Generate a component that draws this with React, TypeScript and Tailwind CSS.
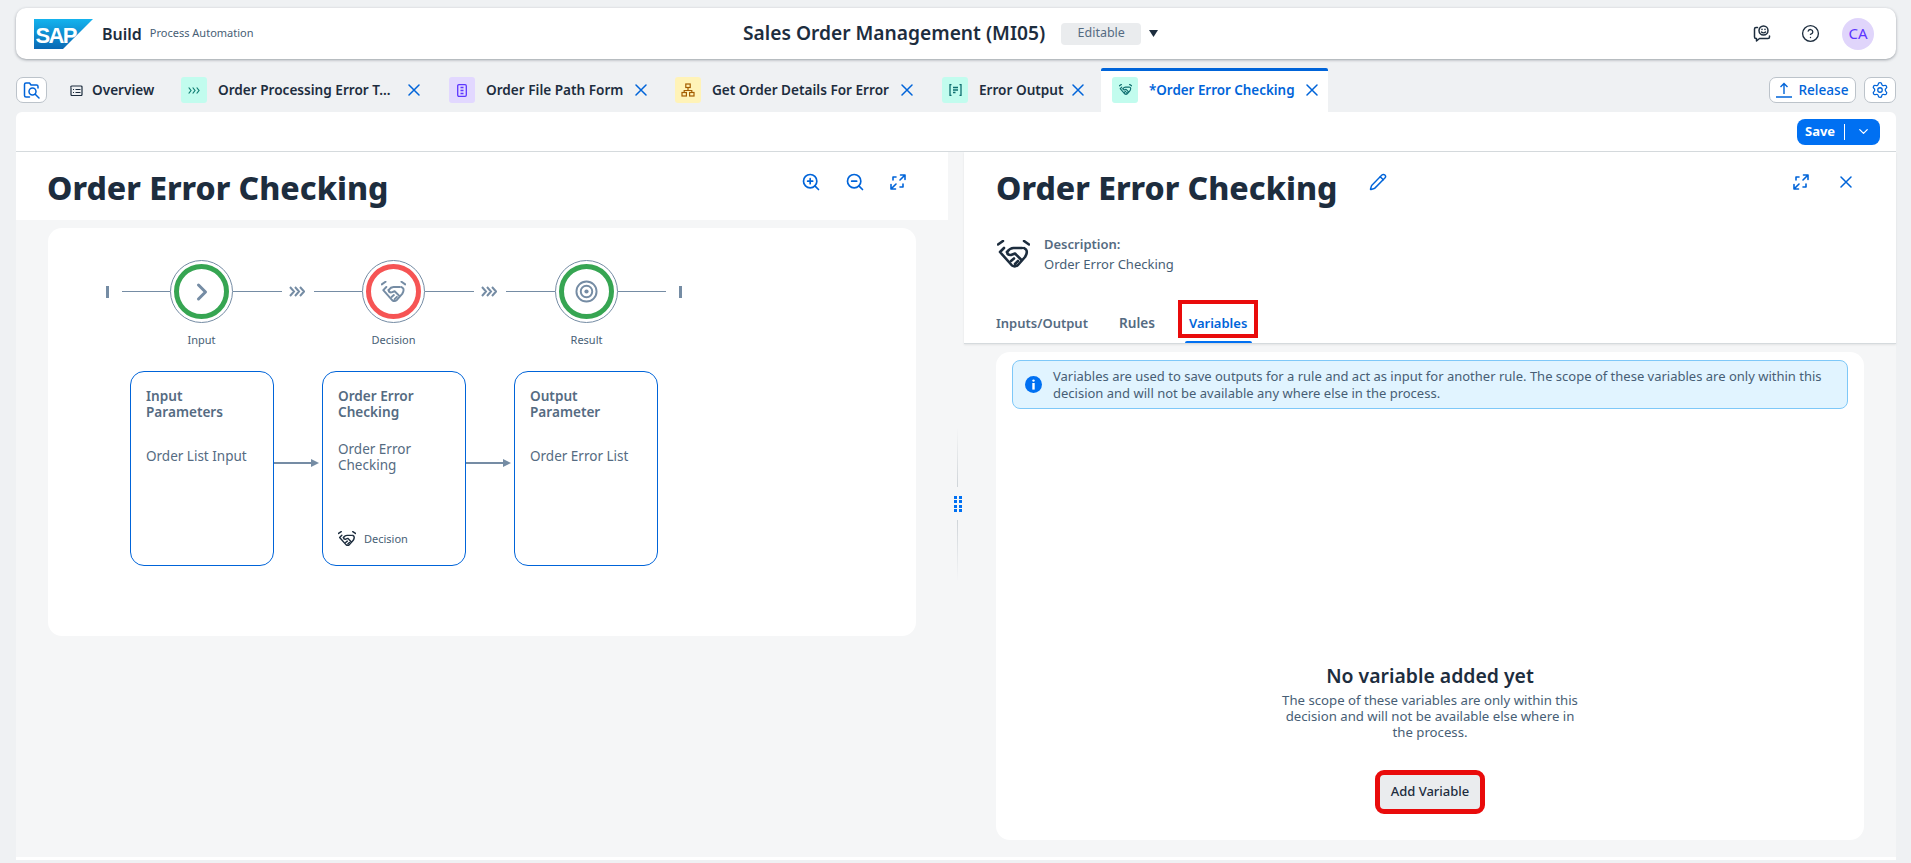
import React from "react";
import { ChevronDown, ZoomIn, ZoomOut, Pencil, CircleHelp, Settings, ChevronRight } from "lucide-react";

const F = { fontFamily: '"Noto Sans","Open Sans",sans-serif' };

function Handshake({ size = 24, color = "#1d2d3e", sw = 2.6 }: { size?: number; color?: string; sw?: number }) {
  return (
    <svg width={size} height={(size * 28) / 33} viewBox="0 0 33 28" fill="none" stroke={color} strokeWidth={sw} strokeLinecap="round" strokeLinejoin="round" className="shrink-0">
      <path d="M1 4.5L6 1M27 1L32 4.5" />
      <path d="M7 8L3 12L15 25.5Q18 27.5 21 25L28 17Q31 12 29 9.5L27 8" />
      <path d="M10 12Q13 8 16.5 8L25 8" />
      <path d="M10 12Q10.5 15.5 14 15L18 13.5L24.5 20" />
      <path d="M14 21L17 18.5M18 24L21 21" />
    </svg>
  );
}

function FolderSearch() {
  return (
    <svg width="18" height="18" viewBox="0 0 18 18" fill="none" stroke="#0064d9" strokeWidth="1.5" strokeLinecap="round" strokeLinejoin="round">
      <path d="M6.5 16H3a1.5 1.5 0 0 1-1.5-1.5V3.5A1.5 1.5 0 0 1 3 2h3.5L8 4h5.5A1.5 1.5 0 0 1 15 5.5V7" />
      <circle cx="9.5" cy="10.5" r="3.5" />
      <path d="M12.2 13.2L16 17" />
    </svg>
  );
}

function SapLogo() {
  return (
    <svg width="59" height="30" viewBox="0 0 59 30" className="shrink-0">
      <defs>
        <linearGradient id="sapg" x1="0" y1="0" x2="0" y2="1">
          <stop offset="0" stopColor="#14b3ee" />
          <stop offset="1" stopColor="#0a68b4" />
        </linearGradient>
      </defs>
      <path d="M0 0h59L29 30H0z" fill="url(#sapg)" />
      <text x="1.5" y="23.5" fontFamily='"Liberation Sans",sans-serif' fontWeight="700" fontSize="22" fill="#fff" letterSpacing="-1.6">SAP</text>
    </svg>
  );
}

function FeedbackIcon() {
  return (
    <svg width="18" height="18" viewBox="0 0 18 18" fill="none" stroke="#1d2d3e" strokeWidth="1.5" strokeLinecap="round" strokeLinejoin="round" className="shrink-0">
      <path d="M4.5 2.5H3A1.5 1.5 0 0 0 1.5 4v8A1.5 1.5 0 0 0 3 13.5h.5v2.5L6.5 13.5H15A1.5 1.5 0 0 0 16.5 12v-1" />
      <circle cx="10.5" cy="5.5" r="4.5" />
      <path d="M8.5 7c1 1 3 1 4 0" />
      <path d="M9 4.2v.2M12 4.2v.2" />
    </svg>
  );
}

function FitIcon({ className = "" }: { className?: string }) {
  return (
    <svg width="16" height="16" viewBox="0 0 16 16" fill="none" stroke="#0064d9" strokeWidth="1.6" strokeLinecap="round" strokeLinejoin="round" className={`shrink-0 ${className}`}>
      <path d="M10.5 1h4.5v4.5M15 1L10 6M1 10.5V15h4.5M1 15l5-5" />
      <path d="M6 3H3v3M13 10v3h-3" />
    </svg>
  );
}

function XIcon({ className = "" }: { className?: string }) {
  return (
    <svg width="12" height="12" viewBox="0 0 12 12" fill="none" stroke="#0064d9" strokeWidth="1.5" strokeLinecap="round" className={`shrink-0 ${className}`}>
      <path d="M1 1l10 10M11 1L1 11" />
    </svg>
  );
}

function Tab({ iconBg, icon, label, labelW, mr }: { iconBg: string; icon: React.ReactNode; label: string; labelW: string; mr: string }) {
  return (
    <div className={`flex h-[26px] shrink-0 items-center ${mr}`}>
      <div className={`flex h-[26px] w-[26px] shrink-0 items-center justify-center rounded-[3px] ${iconBg}`}>{icon}</div>
      <span className={`ml-[11px] whitespace-nowrap text-[13.6px] font-semibold text-[#1d2d3e] ${labelW}`}>{label}</span>
      <XIcon />
    </div>
  );
}

function Stage({ ring, children, label }: { ring: string; children: React.ReactNode; label: string }) {
  return (
    <div className="relative flex h-[63px] w-[63px] shrink-0 items-center justify-center rounded-full border border-[#758ca4] bg-white">
      <div className={`flex h-[55px] w-[55px] items-center justify-center rounded-full border-[5px] ${ring}`}>{children}</div>
      <span className="absolute top-[71px] left-1/2 -translate-x-1/2 text-[11px] leading-[16px] text-[#475e75]">{label}</span>
    </div>
  );
}

function Line({ w }: { w: string }) {
  return <div className={`h-[1.5px] shrink-0 bg-[#758ca4] ${w}`} />;
}

function Chevrons() {
  return (
    <svg width="16" height="11" viewBox="0 0 16 11" fill="none" stroke="#758ca4" strokeWidth="2" className="ml-[7px] mr-[9px] shrink-0">
      <path d="M1 1l4 4.5L1 10M6 1l4 4.5L6 10M11 1l4 4.5-4 4.5" />
    </svg>
  );
}

function Card({ title, body, extra, top }: { title: string[]; body: React.ReactNode; extra?: React.ReactNode; top: string }) {
  return (
    <div className="flex h-[195px] w-[144px] shrink-0 flex-col rounded-[14px] border border-[#0064d9] bg-white px-[15px] pt-[16px] pb-[18px]">
      <div className="text-[13.6px] leading-[16px] font-semibold text-[#556b82]">
        {title.map((t) => <div key={t}>{t}</div>)}
      </div>
      <div className={`${top} text-[13.5px] leading-[16px] text-[#556b82]`}>{body}</div>
      {extra}
    </div>
  );
}

function Arrow() {
  return (
    <div className="mt-[88px] flex w-[48px] shrink-0 items-center self-start pr-[3px]">
      <div className="h-[1.5px] flex-1 bg-[#758ca4]" />
      <svg width="8" height="8" viewBox="0 0 8 8" className="shrink-0"><path d="M0 0l8 4-8 4z" fill="#758ca4" /></svg>
    </div>
  );
}

export default function App() {
  return (
    <div style={F} className="flex h-[863px] w-[1911px] flex-col overflow-hidden bg-[#eff1f3] text-[#1d2d3e]">
      {/* Shell bar */}
      <header className="mt-[8px] mr-[15px] ml-[16px] flex h-[51px] shrink-0 items-center rounded-[10px] bg-white pr-[22px] pl-[18px] shadow-[0_1px_3px_rgba(50,60,70,0.45)]">
        <div className="flex w-[709px] shrink-0 items-center">
          <SapLogo />
          <span className="ml-[9px] text-[16px] font-semibold">Build</span>
          <span className="ml-[8px] text-[11px] text-[#475e75]">Process Automation</span>
        </div>
        <span className="text-[19.2px] font-semibold">Sales Order Management (MI05)</span>
        <span className="ml-[16px] flex h-[22px] w-[80px] items-center justify-center rounded-[4px] bg-[#eaecee] text-[12.5px] text-[#556b82]">Editable</span>
        <svg width="9" height="7" viewBox="0 0 9 7" className="ml-[8px]"><path d="M0 0h9L4.5 7z" fill="#1d2d3e" /></svg>
        <div className="ml-auto flex items-center">
          <FeedbackIcon />
          <CircleHelp size={19} strokeWidth={1.7} className="ml-[30px]" />
          <div className="ml-[22px] flex h-[32px] w-[32px] items-center justify-center rounded-full bg-[#e0d5fb] text-[15px] text-[#5d36ff]">CA</div>
        </div>
      </header>

      {/* Tab bar */}
      <div className="mt-[9px] mr-[15px] ml-[16px] flex h-[44px] shrink-0 items-center">
        <div className="flex h-[26px] w-[31px] shrink-0 items-center justify-center rounded-[7px] border border-[#bcc3ca] bg-white"><FolderSearch /></div>
        <svg width="13" height="11" viewBox="0 0 13 11" fill="none" stroke="#1d2d3e" strokeWidth="1.2" className="ml-[23px] shrink-0">
          <path d="M1 2.5V9.5a1 1 0 0 0 1 1h9a1 1 0 0 0 1-1V2a1 1 0 0 0-1-1H4" />
          <path d="M1 2.5a1 1 0 0 1 1-1.5h2M3 4.5h1M5.5 4.5h5M3 7.5h1M5.5 7.5h5" />
        </svg>
        <span className="ml-[9px] w-[89px] shrink-0 text-[13.6px] font-semibold">Overview</span>
        <Tab mr="mr-[29px]" labelW="w-[190px]" iconBg="bg-[#c2fcee]" label="Order Processing Error T..." icon={
          <svg width="12" height="7" viewBox="0 0 12 7" fill="none" stroke="#0f7f73" strokeWidth="1.2"><path d="M.7.5L3 3.5.7 6.5M4.7.5L7 3.5 4.7 6.5M8.7.5L11 3.5 8.7 6.5" /></svg>
        } />
        <Tab mr="mr-[28px]" labelW="w-[149px]" iconBg="bg-[#e2d8ff]" label="Order File Path Form" icon={
          <svg width="10" height="13" viewBox="0 0 10 13" fill="none" stroke="#5d36ff" strokeWidth="1.3"><rect x=".7" y=".7" width="8.6" height="11.6" rx="1.2" /><path d="M3.5 3.5h3M3.5 6.5h3M3.5 9.5h3" /></svg>
        } />
        <Tab mr="mr-[29px]" labelW="w-[189px]" iconBg="bg-[#fff3b8]" label="Get Order Details For Error" icon={
          <svg width="14" height="14" viewBox="0 0 14 14" fill="none" stroke="#a45d00" strokeWidth="1.2"><rect x="4.8" y="1" width="4.4" height="3.5" /><rect x="1" y="9.5" width="4.4" height="3.5" /><rect x="8.6" y="9.5" width="4.4" height="3.5" /><path d="M7 4.5v3M3.2 9.5v-2h7.6v2" /></svg>
        } />
        <Tab mr="mr-[17px]" labelW="w-[93px]" iconBg="bg-[#c2fcee]" label="Error Output" icon={
          <svg width="13" height="12" viewBox="0 0 13 12" fill="none" stroke="#0f6f70" strokeWidth="1.3"><path d="M2.5.7H1v10.6h1.5M10.5.7H12v10.6h-1.5M4 3.5h5M4 6h5M4 8.5h2.5" /></svg>
        } />
        <div className="flex h-[44px] w-[227px] shrink-0 items-start rounded-t-[2px] border-t-[3px] border-[#0064d9] bg-white pt-[6px] pl-[11px]">
          <div className="flex h-[26px] w-[26px] shrink-0 items-center justify-center rounded-[3px] bg-[#c2fcee]"><Handshake size={13} color="#0f6f70" sw={3} /></div>
          <span className="ml-[11px] w-[157px] whitespace-nowrap text-[13.4px] leading-[26px] font-semibold text-[#0064d9]">*Order Error Checking</span>
          <XIcon className="mt-[7px]" />
        </div>
        <div className="ml-auto flex items-center">
          <div className="flex h-[26px] w-[87px] items-center justify-center rounded-[7px] border border-[#bcc3ca] bg-white text-[13.6px] font-medium text-[#0064d9]">
            <svg width="16" height="16" viewBox="0 0 16 16" fill="none" stroke="#0064d9" strokeWidth="1.4" className="mr-[6px]"><path d="M0 15h16M8 12V2M4.5 5L8 1.5 11.5 5" /></svg>
            Release
          </div>
          <div className="ml-[8px] flex h-[26px] w-[32px] items-center justify-center rounded-[7px] border border-[#bcc3ca] bg-white"><Settings size={18} strokeWidth={1.7} className="text-[#0064d9]" /></div>
        </div>
      </div>

      {/* Main */}
      <main className="mr-[15px] mb-[3px] ml-[16px] flex min-h-0 flex-1 flex-col rounded-t-[6px] rounded-b-[4px] bg-white">
        <div className="flex h-[40px] shrink-0 items-center justify-end border-b border-[#d5dadd] pr-[16px]">
          <div className="flex h-[26px] w-[83px] items-center rounded-[8px] bg-[#0070f2] pl-[8px] text-white">
            <span className="w-[30px] text-[13px] font-bold">Save</span>
            <div className="ml-[9px] h-[16px] w-[1px] bg-white" />
            <ChevronDown size={15} className="ml-[11px]" />
          </div>
        </div>

        <div className="flex min-h-0 flex-1 bg-[#f5f6f7]">
          {/* Left column */}
          <section className="flex w-[932px] shrink-0 flex-col">
            <div className="flex h-[68px] shrink-0 items-start justify-between bg-white pt-[14px] pr-[42px] pl-[31px]">
              <h1 className="text-[32px] leading-[44px] font-extrabold text-[#1d2d3e]">Order Error Checking</h1>
              <div className="mt-[6px] flex items-center text-[#0064d9]">
                <ZoomIn size={20} strokeWidth={2} />
                <ZoomOut size={20} strokeWidth={2} className="ml-[24px]" />
                <FitIcon className="ml-[25px]" />
              </div>
            </div>
            <div className="mt-[8px] ml-[32px] h-[408px] w-[868px] rounded-[14px] bg-white pt-[32px] pl-[58px]">
              {/* Process stages */}
              <div className="flex h-[63px] items-center">
                <div className="mr-[13px] h-[12px] w-[3px] shrink-0 bg-[#758ca4]" />
                <Line w="w-[48px]" />
                <Stage ring="border-[#36a552]" label="Input"><ChevronRight size={28} strokeWidth={2.6} className="text-[#758ca4]" /></Stage>
                <Line w="w-[49px]" />
                <Chevrons />
                <Line w="w-[48px]" />
                <Stage ring="border-[#f65454]" label="Decision"><Handshake size={25} color="#758ca4" sw={2.6} /></Stage>
                <Line w="w-[49px]" />
                <Chevrons />
                <Line w="w-[49px]" />
                <Stage ring="border-[#36a552]" label="Result">
                  <svg width="23" height="23" viewBox="0 0 24 24" fill="none" stroke="#758ca4" strokeWidth="2"><circle cx="12" cy="12" r="10.5" /><circle cx="12" cy="12" r="6" /><circle cx="12" cy="12" r="2.2" fill="#758ca4" stroke="none" /></svg>
                </Stage>
                <Line w="w-[48px]" />
                <div className="ml-[13px] h-[12px] w-[3px] shrink-0 bg-[#758ca4]" />
              </div>
              {/* Cards */}
              <div className="mt-[48px] ml-[24px] flex items-start">
                <Card title={["Input", "Parameters"]} top="mt-[28px]" body="Order List Input" />
                <Arrow />
                <Card title={["Order Error", "Checking"]} top="mt-[21px]" body={<>Order Error<br />Checking</>} extra={
                  <div className="mt-auto flex items-center gap-[8px] text-[11px] leading-[16px] text-[#475e75]">
                    <Handshake size={18} />Decision
                  </div>
                } />
                <Arrow />
                <Card title={["Output", "Parameter"]} top="mt-[28px]" body="Order Error List" />
              </div>
            </div>
          </section>

          {/* Splitter */}
          <div className="flex w-[16px] shrink-0 flex-col items-center justify-center pl-[3px]">
            <div className="h-[60px] w-[1px] bg-gradient-to-b from-transparent to-[#cfd4d8]" />
            <div className="mt-[9px] mb-[8px] flex flex-col gap-[2px]">
              <div className="grid grid-cols-2 gap-x-[2px] gap-y-[1px]">
                {[0, 1, 2, 3].map((i) => <div key={i} className="h-[3px] w-[3px] bg-[#0070f2]" />)}
              </div>
              <div className="grid grid-cols-2 gap-x-[2px] gap-y-[1px]">
                {[0, 1, 2, 3].map((i) => <div key={i} className="h-[3px] w-[3px] bg-[#0070f2]" />)}
              </div>
            </div>
            <div className="h-[62px] w-[1px] bg-gradient-to-t from-transparent to-[#cfd4d8]" />
          </div>

          {/* Right column */}
          <section className="flex min-w-0 flex-1 flex-col">
            <div className="h-[192px] shrink-0 border-b border-[#d5dadd] bg-white shadow-[0_1px_2px_rgba(0,0,0,0.08)]">
              <div className="flex items-start pt-[14px] pr-[44px] pl-[32px]">
                <h2 className="text-[32px] leading-[44px] font-extrabold">Order Error Checking</h2>
                <Pencil size={18} strokeWidth={1.9} className="mt-[7px] ml-[32px] text-[#0064d9]" />
                <div className="mt-[8px] ml-auto flex items-center gap-[31px] text-[#0064d9]">
                  <FitIcon />
                  <XIcon />
                </div>
              </div>
              <div className="mt-[24px] flex items-center pl-[33px]">
                <Handshake size={33} />
                <div className="ml-[14px] text-[13px] leading-[20px]">
                  <div className="font-semibold text-[#556b82]">Description:</div>
                  <div className="text-[#475e75]">Order Error Checking</div>
                </div>
              </div>
              <div className="mt-[26px] flex h-[43px] items-start pl-[32px] text-[13px] font-semibold text-[#556b82]">
                <span className="mt-[13px] w-[90px] leading-[20px]">Inputs/Output</span>
                <span className="mt-[13px] ml-[33px] w-[37px] leading-[20px] text-[13.6px]">Rules</span>
                <div className="relative ml-[33px] h-[43px]">
                  <span className="mt-[13px] block leading-[20px] text-[#0064d9]">Variables</span>
                  <div className="absolute bottom-0 left-[-4px] h-[2px] w-[67px] rounded-t bg-[#0070f2]" />
                  <div className="absolute top-0 left-[-11px] h-[38px] w-[80px] border-[4px] border-[#e90b0b]" />
                </div>
              </div>
            </div>

            <div className="mt-[8px] mr-[32px] ml-[32px] flex h-[488px] shrink-0 flex-col items-center rounded-[14px] bg-white px-[16px] pt-[8px]">
              <div className="flex h-[49px] w-full shrink-0 items-center rounded-[8px] border border-[#7ec8f8] bg-[#e1f4ff] pl-[12px] text-[13px] leading-[17px] text-[#475e75]">
                <svg width="17" height="17" viewBox="0 0 17 17" className="mr-[11px] shrink-0">
                  <circle cx="8.5" cy="8.5" r="8.5" fill="#0070f2" />
                  <rect x="7.3" y="3.4" width="2.4" height="2.4" rx="1.2" fill="#fff" />
                  <rect x="7.3" y="7" width="2.4" height="6.6" fill="#fff" />
                </svg>
                <p className="w-[790px]">Variables are used to save outputs for a rule and act as input for another rule. The scope of these variables are only within this decision and will not be available any where else in the process.</p>
              </div>
              <div className="mt-[253px] text-[19.4px] leading-[27px] font-semibold">No variable added yet</div>
              <p className="mt-[3px] w-[305px] text-center text-[13.2px] leading-[16px] text-[#475e75]">The scope of these variables are only within this decision and will not be available else where in the process.</p>
              <div className="mt-[30px] flex h-[44px] w-[110px] items-center justify-center rounded-[9px] border-[5px] border-[#e90b0b] bg-[#eaecee] text-[13px] font-medium">Add Variable</div>
            </div>
          </section>
        </div>
        <div className="h-[3px] shrink-0 bg-white" />
      </main>
    </div>
  );
}
